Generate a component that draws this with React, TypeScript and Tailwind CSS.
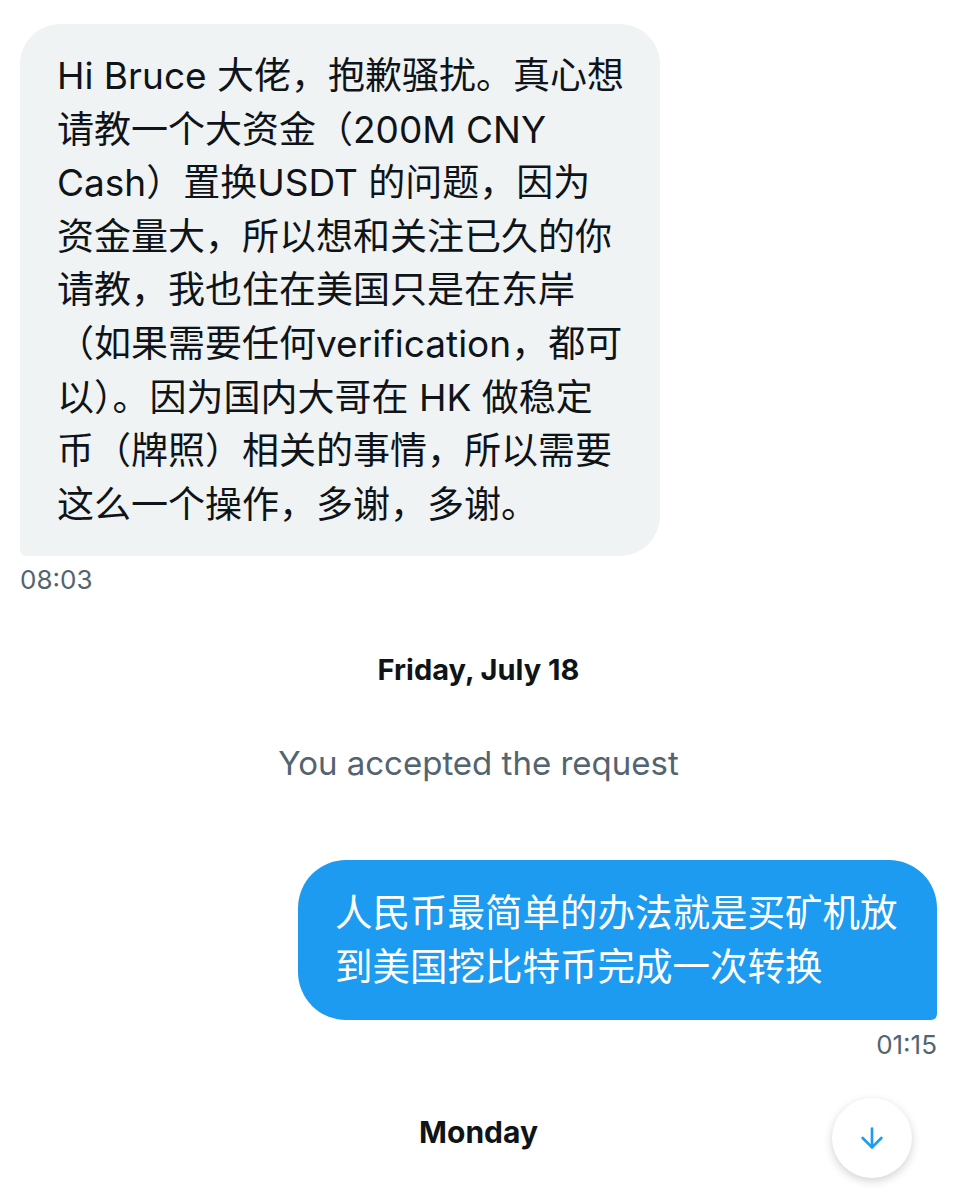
import React from "react";
import { ArrowDown } from "lucide-react";

const incoming = [
  "Hi Bruce 大佬，抱歉骚扰。真心想",
  "请教一个大资金（200M CNY",
  "Cash）置换USDT 的问题，因为",
  "资金量大，所以想和关注已久的你",
  "请教，我也住在美国只是在东岸",
  "（如果需要任何verification，都可",
  "以）。因为国内大哥在 HK 做稳定",
  "币（牌照）相关的事情，所以需要",
  "这么一个操作，多谢，多谢。",
];

const outgoing = ["人民币最简单的办法就是买矿机放", "到美国挖比特币完成一次转换"];

export default function App() {
  return (
    <div className="relative min-h-[1200px] bg-white px-5 pt-6 font-['Inter','Noto_Sans_CJK_SC',sans-serif] text-[#0f1419]">
      {/* Received message */}
      <div className="w-[640px] rounded-[40px] rounded-bl-[6px] bg-[#eff3f4] py-[25px] pl-[37px] pr-[20px] text-[37px] leading-[53.6px]">
        {incoming.map((line) => (
          <div key={line} className="whitespace-nowrap">
            {line}
          </div>
        ))}
      </div>
      <div className="mt-2 text-[26px] leading-8 text-[#536471]">08:03</div>

      {/* Date divider */}
      <div className="mt-[58px] text-center text-[29px] font-bold leading-8">
        Friday, July 18
      </div>
      <div className="mt-[57px] text-center text-[33px] leading-10 text-[#536471]">
        You accepted the request
      </div>

      {/* Sent message */}
      <div className="mt-[77px] flex justify-end">
        <div className="w-[639px] rounded-[48px] rounded-br-[6px] bg-[#1d9bf0] py-[26px] pl-[37px] text-[37.5px] leading-[54px] text-white">
          {outgoing.map((line) => (
            <div key={line} className="whitespace-nowrap">
              {line}
            </div>
          ))}
        </div>
      </div>
      <div className="mt-[9px] text-right text-[26px] leading-8 text-[#536471]">01:15</div>

      <div className="mt-[55px] text-center text-[30px] font-bold leading-8">Monday</div>

      {/* Scroll-to-bottom button */}
      <button className="absolute left-[832px] top-[1098px] flex h-20 w-20 items-center justify-center rounded-full bg-white shadow-[0_3px_10px_rgba(0,0,0,0.18)]">
        <ArrowDown className="h-8 w-8 text-[#1d9bf0]" strokeWidth={2} />
      </button>
    </div>
  );
}
